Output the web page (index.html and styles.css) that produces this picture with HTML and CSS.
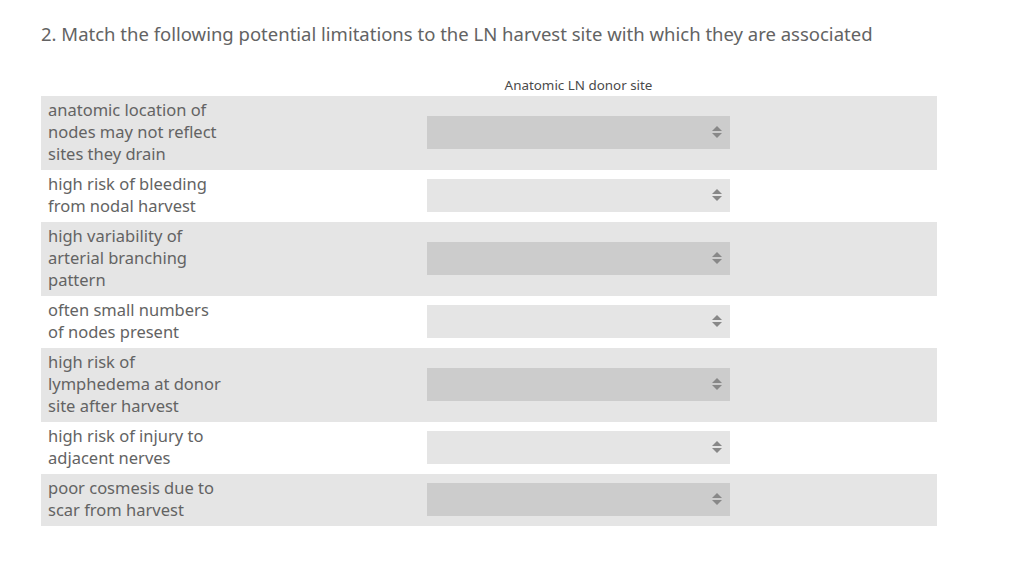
FILE: index.html
```html
<!DOCTYPE html>
<html lang="en">
<head>
  <meta charset="UTF-8">
  <title>Matrix question</title>
  <link rel="stylesheet" href="styles.css">
</head>
<body>

<div class="question">
  <h2 class="question-title">2. Match the following potential limitations to the LN harvest site with which they are associated</h2>

  <div class="matrix">
    <div class="matrix-head">
      <div class="label-cell"></div>
      <div class="head-cell">Anatomic LN donor site</div>
    </div>

    <div class="matrix-row odd">
      <div class="label-cell">anatomic location of nodes may not reflect sites they drain</div>
      <div class="select-cell"><div class="fake-select"><span class="arrows"></span></div></div>
    </div>
    <div class="matrix-row">
      <div class="label-cell">high risk of bleeding from nodal harvest</div>
      <div class="select-cell"><div class="fake-select"><span class="arrows"></span></div></div>
    </div>
    <div class="matrix-row odd">
      <div class="label-cell">high variability of arterial branching pattern</div>
      <div class="select-cell"><div class="fake-select"><span class="arrows"></span></div></div>
    </div>
    <div class="matrix-row">
      <div class="label-cell">often small numbers of nodes present</div>
      <div class="select-cell"><div class="fake-select"><span class="arrows"></span></div></div>
    </div>
    <div class="matrix-row odd">
      <div class="label-cell">high risk of lymphedema at donor site after harvest</div>
      <div class="select-cell"><div class="fake-select"><span class="arrows"></span></div></div>
    </div>
    <div class="matrix-row">
      <div class="label-cell">high risk of injury to adjacent nerves</div>
      <div class="select-cell"><div class="fake-select"><span class="arrows"></span></div></div>
    </div>
    <div class="matrix-row odd">
      <div class="label-cell">poor cosmesis due to scar from harvest</div>
      <div class="select-cell"><div class="fake-select"><span class="arrows"></span></div></div>
    </div>
  </div>
</div>

</body>
</html>
```

FILE: styles.css
```css
body {
  margin: 0;
  background: #ffffff;
  font-family: "Noto Sans", "Open Sans", sans-serif;
  color: #636363;
}
.question {
  padding: 21px 0 0 41px;
}
.question-title {
  margin: 0;
  font-size: 18.5px;
  font-weight: 400;
  line-height: 26px;
  color: #636363;
}
.matrix {
  width: 896px;
  margin-top: 23px;
}
.matrix-head,
.matrix-row {
  display: flex;
  align-items: center;
}
.matrix-head {
  height: 22px;
  padding-top: 4px;
}
.label-cell {
  width: 180px;
  padding: 3px 7px 5px;
  font-size: 16.5px;
  line-height: 22px;
}
.head-cell {
  width: 303px;
  margin-left: 192px;
  text-align: center;
  font-size: 13.4px;
  color: #4a4a4a;
}
.matrix-row.odd {
  background: #e5e5e5;
}
.select-cell {
  margin-left: 192px;
  margin-bottom: 1px;
}
.fake-select {
  position: relative;
  width: 303px;
  height: 33px;
  background: #e5e5e5;
}
.matrix-row.odd .fake-select {
  background: #cccccc;
}
/* up/down arrows at the right of the select */
.arrows {
  position: absolute;
  right: 8px;
  top: 10px;
  width: 10px;
  height: 12px;
}
.arrows::before,
.arrows::after {
  content: "";
  position: absolute;
  left: 0;
  border-left: 5px solid transparent;
  border-right: 5px solid transparent;
}
.arrows::before {
  top: 0;
  border-bottom: 5px solid #888;
}
.arrows::after {
  bottom: 0;
  border-top: 5px solid #888;
}
```
